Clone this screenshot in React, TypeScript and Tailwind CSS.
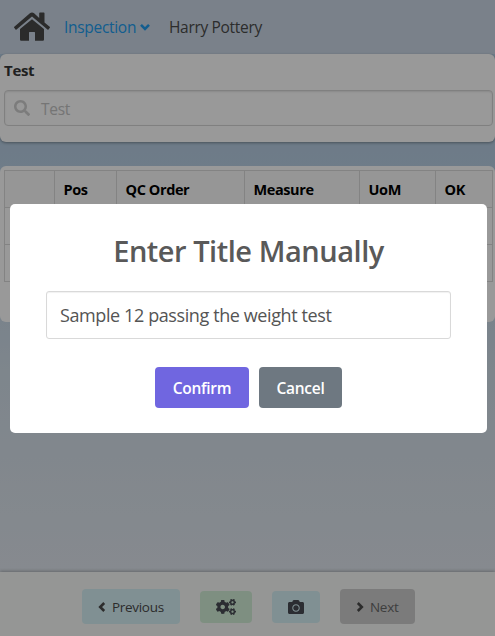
import React from "react";
import { FaHome, FaSearch, FaCogs, FaCamera } from "react-icons/fa";

const columns = [
  { label: "", width: "w-[50px]" },
  { label: "Pos", width: "w-[62px]" },
  { label: "QC Order", width: "w-[128px]" },
  { label: "Measure", width: "w-[115px]" },
  { label: "UoM", width: "w-[76px]" },
  { label: "OK", width: "w-[57px]" },
];

function Chevron({ d, className }: { d: string; className: string }) {
  return (
    <svg viewBox="0 0 10 10" className={`size-2.5 shrink-0 fill-none stroke-current ${className}`} strokeWidth="2.6">
      <path d={d} />
    </svg>
  );
}

function Header() {
  return (
    <header className="flex h-[54px] items-center bg-[#cbd8e7] pl-3.5 text-[15.5px]">
      <svg viewBox="0 0 36 30" className="h-[30px] w-9 shrink-0 fill-[#484848]">
        <path d="M18 .6c-.8 0-1.500.2-2.100.7L.3 14.800c-.3.3-.4.7-.1 1l1.300 1.600c.3.3.7.4 1 .1L18 4.600l15.500 12.900c.3.3.7.2 1-.1l1.300-1.600c.3-.3.2-.7-.1-1L30.500 10.500V1.200c0-.4-.3-.7-.7-.7h-3.900c-.4 0-.7.3-.7.7v4.900l-5.100-4.800C19.500.8 18.800.6 18 .6z" />
        <path d="M18 7.200 6 17.100v10.300c0 .8.600 1.400 1.400 1.400H15v-8.300c0-.3.300-.6.6-.6h4.800c.3 0 .6.300.6.6v8.300h7.600c.8 0 1.400-.6 1.400-1.400V17.100z" />
      </svg>
      <span className="ml-3.5 w-[73px] whitespace-nowrap pt-px tracking-[-0.3px] text-[#209cee]">Inspection</span>
      <Chevron d="M1 2.800 5 6.800 9 2.800" className="ml-[3px] text-[#209cee]" />
      <span className="ml-[19px] whitespace-nowrap pt-px tracking-[-0.32px] text-[#4a4a4a]">Harry Pottery</span>
    </header>
  );
}

function Footer() {
  return (
    <footer className="mt-auto flex h-16 items-center gap-5 bg-[#f8fbf8] pb-px pl-[82px] pt-[6px] text-[13.5px] text-[#4a4a4a] shadow-[0_-1px_3px_rgba(0,0,0,0.25)]">
      <button className="flex h-[35px] w-[98px] items-center rounded bg-[#d6f0f5] pl-[15px] tracking-[-0.3px]">
        <Chevron d="M7.200 1 3.200 5 7.200 9" className="mr-[5px]" />
        <span className="pt-px">Previous</span>
      </button>
      <button className="flex h-8 w-[52px] items-center justify-center rounded bg-[#d3efd7] text-[#484c54]">
        <FaCogs className="h-4 w-5" />
      </button>
      <button className="flex h-8 w-12 items-center justify-center rounded bg-[#d6f0f5] text-[#484c54]">
        <FaCamera className="size-4" />
      </button>
      <button className="flex h-[35px] w-[75px] items-center rounded bg-[#cdcdcd] pl-[15px] tracking-[-0.3px] text-[#686868]">
        <Chevron d="M2.800 1 6.800 5 2.800 9" className="mr-[5px] text-[#4a4a4a]" />
        <span className="pt-px">Next</span>
      </button>
    </footer>
  );
}

export default function App() {
  return (
    <div className="relative h-[636px] w-[495px] overflow-hidden font-['Open_Sans','Noto_Sans',sans-serif]">
      <div className="flex h-full flex-col bg-[linear-gradient(#b4cde4_0px,#b7cee3_150px,#d2dfea_370px,#e0e6ee_572px)]">
        <Header />
        <section className="h-[88px] shrink-0 rounded-md bg-white px-1 pt-1 shadow-[0_1px_3px_rgba(0,0,0,0.35)]">
          <label className="block h-8 text-[15px] font-bold leading-6 tracking-[-0.3px] text-[#363636]">Test</label>
          <div className="flex h-9 w-[489px] items-center rounded border border-[#d6d6d6] pl-[9px] shadow-[inset_0_1px_2px_rgba(0,0,0,0.1)]">
            <FaSearch className="size-4 text-[#cfcfcf]" />
            <span className="ml-[11px] pt-[3px] text-[15.5px] tracking-[-0.3px] text-[#c3c3c3]">Test</span>
          </div>
        </section>
        <section className="mt-6 h-[156px] shrink-0 rounded-md bg-white px-1 pt-1">
          <table className="w-[489px] table-fixed border-collapse text-left text-[14.5px] tracking-[-0.4px]">
            <thead>
              <tr className="h-[37px] bg-[#fafafa]">
                {columns.map((c, i) => (
                  <th key={i} className={`${c.width} whitespace-nowrap border border-[#dbdbdb] pb-0 pl-[8.5px] pr-0 pt-0.5 font-bold text-black`}>
                    {c.label}
                  </th>
                ))}
              </tr>
            </thead>
            <tbody>
              {[1, 2].map((row) => (
                <tr key={row} className="h-[37px]">
                  {columns.map((_, i) => (
                    <td key={i} className="border border-[#dbdbdb] p-0" />
                  ))}
                </tr>
              ))}
            </tbody>
          </table>
        </section>
        <Footer />
      </div>
      <div className="absolute inset-0 bg-black/40 pl-2.5 pt-[204px]">
        <div role="dialog" className="flex h-[229px] w-[477px] flex-col items-center rounded-[5px] bg-white">
          <h2 className="mt-[27px] h-10 whitespace-nowrap text-[29px] font-semibold leading-10 tracking-[-0.47px] text-[#595959]">
            Enter Title Manually
          </h2>
          <div className="mt-5 flex h-12 w-[405px] items-center rounded-[3px] border border-[#d9d9d9] pl-[13px] pt-px text-[18px] tracking-[-0.4px] text-[#545454] shadow-[inset_0_1px_1px_rgba(0,0,0,0.06)]">
            Sample 12 passing the weight test
          </div>
          <div className="mt-7 flex gap-2.5 text-[15.5px] font-semibold tracking-[-0.3px] text-white">
            <button className="h-[41px] w-[94px] rounded bg-[#7066e0] pt-0.5">Confirm</button>
            <button className="h-[41px] w-[83px] rounded bg-[#6e7881] pt-0.5">Cancel</button>
          </div>
        </div>
      </div>
    </div>
  );
}
